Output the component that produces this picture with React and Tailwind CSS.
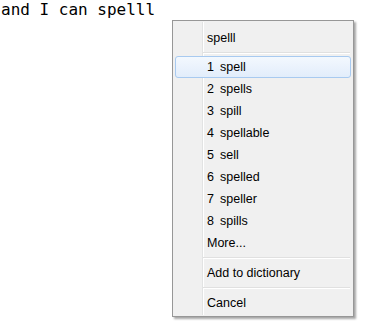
import React from 'react';

const suggestions = ['spell', 'spells', 'spill', 'spellable', 'sell', 'spelled', 'speller', 'spills'];

const Separator = ({ h = 'h-[8px]' }) => (
    <div className={`${h} flex flex-col justify-center pl-[30px] pr-[3px]`}>
        <div className="h-px bg-[#e0e0e0]" />
        <div className="h-px bg-white" />
    </div>
);

const Item = ({ children, active }) => (
    <div
        className={`h-[22px] mx-[2px] flex items-center pl-[31px] rounded-[3px] border ${
            active
                ? 'border-[#a8caf0] bg-gradient-to-b from-[#f3f8fe] to-[#e2edfb]'
                : 'border-transparent'
        }`}
    >
        {children}
    </div>
);

const App = () => {
    return (
        <div className="relative w-[384px] h-[335px] bg-white overflow-hidden">
            <div className="pl-[1px] text-[16px] leading-[19px] text-black" style={{ fontFamily: '"DejaVu Sans Mono", monospace' }}>
                and I can spelll
            </div>

            <div
                className="absolute left-[172px] top-[20px] w-[182px] h-[297px] bg-[#f0f0f0] border border-[#979797] shadow-[2px_2px_2px_rgba(0,0,0,0.35)] text-[12.5px] text-black"
                style={{ fontFamily: '"Liberation Sans", Arial, sans-serif' }}
            >
                <div className="absolute left-[29px] top-[1px] bottom-[1px] flex">
                    <div className="w-px bg-[#e2e3e3]" />
                    <div className="w-px bg-white" />
                </div>
                <div className="relative flex flex-col pt-[6px]">
                    <Item>spelll</Item>
                    <Separator h="h-[7px]" />
                    {suggestions.map((s, i) => (
                        <Item key={s} active={i === 0}>
                            <span className="w-[13px]">{i + 1}</span>
                            <span>{s}</span>
                        </Item>
                    ))}
                    <Item>More...</Item>
                    <Separator />
                    <Item>Add to dictionary</Item>
                    <Separator />
                    <Item>Cancel</Item>
                </div>
            </div>
        </div>
    );
};

export default App;
